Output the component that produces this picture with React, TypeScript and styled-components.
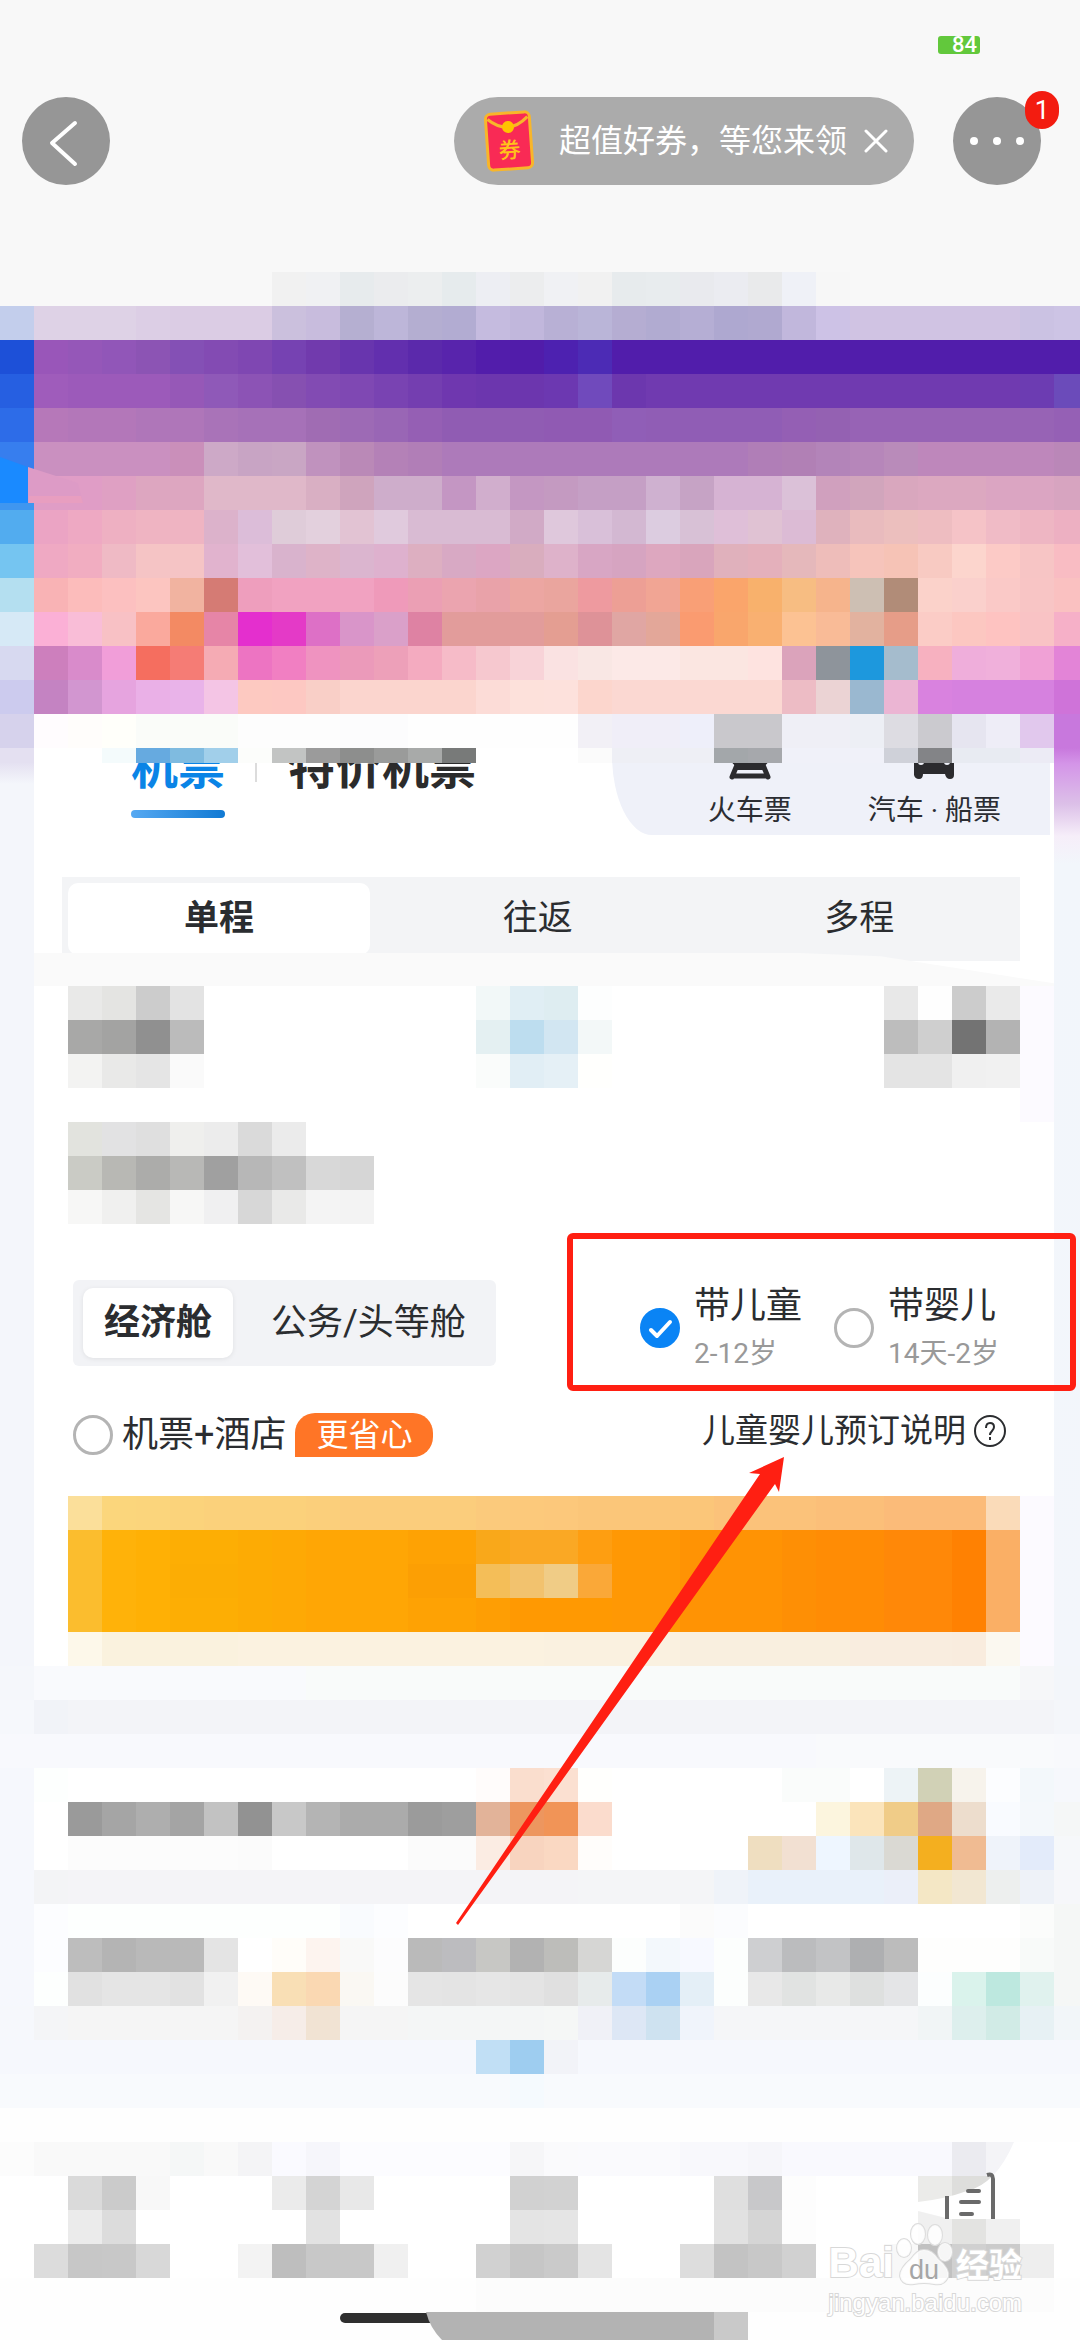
import React from 'react';
import styled, { createGlobalStyle } from 'styled-components';

const GlobalStyle = createGlobalStyle`
  *, *::before, *::after { box-sizing: border-box; }
  html, body { margin: 0; padding: 0; background: #fdfdfd; }
  body { font-family: Roboto, "Noto Sans CJK SC", sans-serif; color: #2b2d30; }
  button { font: inherit; color: inherit; border: 0; padding: 0; background: none; cursor: pointer; }
`;

/* ---------- pixelated areas ---------- */

const MosaicGrid = styled.div<{ $columns: string }>`
  display: grid;
  grid-template-columns: ${(p) => p.$columns};
`;

const Cell = styled.span<{ $color: string; $span: number; $height: number }>`
  grid-column: span ${(p) => p.$span};
  height: ${(p) => p.$height}px;
  background: ${(p) => p.$color};
`;

const FULL_WIDTH = 'repeat(31, minmax(0, 34fr)) minmax(0, 26fr)';
const CARD_WIDTH = 'repeat(30, minmax(0, 1fr))';

type MosaicProps = { rows: string[]; columns?: string; heights?: number[] };

/* Each row lists hex colours, "x*n" repeats one, "-" leaves the cell clear. */
function Mosaic({ rows, columns = FULL_WIDTH, heights = [] }: MosaicProps) {
  return (
    <MosaicGrid $columns={columns} aria-hidden="true">
      {rows.map((row, r) =>
        row.split(' ').map((token, c) => {
          const [color, count] = token.split('*');
          return (
            <Cell
              key={`${r}-${c}`}
              $color={color === '-' ? 'transparent' : `#${color}`}
              $span={Number(count ?? 1)}
              $height={heights[r] ?? 34}
            />
          );
        }),
      )}
    </MosaicGrid>
  );
}

const bannerRows = [
  'f8f8f8*8 f1f1f1 f0f1f3 e7ebed ebecee eceeef e6ebed edeef3 ecedee f0f1f4 f1f1f1 e7ebed e8ecee e9eaee ebecf1 e9eaeb eff1f7 f7f7f7 f8f8f8*7',
  'c3ceec ded2e6*3 dccee5 dbcce4*3 cbc0dd c8bcdd b5afd1 bdb6d9 b4aed1 b2acd2 c5bbdf c1b7dc b8b0d5 bab5d8 b5add2 b1abd1 b5aed4 aea8d0 b0a9d0 c1b7dc cdc2e6 d0c3e3*5 cbc2e3 cdc4e5',
  '1d50d8 9956b9 9557b8 9156b8 8c54b4 8450b5 834bb3 7f47b2 7642b2 713aad 6835ae 622fae 5b29ab 5824ac 521dab 511caa 4d21b0 4c2bb5 511dab*14',
  '265fe1 9f5cbb 9c5aba*3 9658b7 8f59b8 8c53b5 8650b1 824bb3 7f48b3 7943b2 743eb0 6f37af 6c36ae*2 6c38b1 704abc 6c37ae 703ab0*11 6c3cb2 6b4bba',
  '2d6ce8 b678b9 b377b9*2 af76b9*2 a973b8 a671b8*2 a06cb3 9d6ab5 9966b5 955fb4 905cb3*3 905ab3*2 905eb7 905db5*4 945fb4 9461b2 9763b5*6 9560b5',
  '377eee ca90c0*4 ca8fba cda9c7 c8a4c4 c9a6c4 c092be ba89b7 b481b7 b17eb7 ad7aba*9 b07eb7 b180b5 b384b9 b686ba b98bba be87bb*4 ba87b8',
  '3f96f0 e09dc6*2 dfa0c3 dda6c0*2 e0b8c9*3 d9afc3 cfa4bd ceadcb*2 c496c3 d1aecd c497c2 c49ac1 c59fc5*2 cfb1d0 c6a3c5 d6b3d3*2 dbc1d8 d0a0be d1a5bc d9a7be dca8c0*2 dba5c2*2 d7a4c0',
  '52acef eba4c4 eea9c3 eeb0c2 efb4c2*2 dcb2cb dcbdd9 dfccd9 e3d0dd e2c3d3 e0cadd d9bbd3*3 d1aac6 dfc8dc d9c0d9 d3b8d2 dccce0 d8c1d6 dfbfd8 e0c2d3 dcbbd5 dfb2bd e9bbbe ecbfbe eebdc1 f5c3c7 f0bbc6 eeb6c3 edb0c2',
  '75c5f1 efa9c3 f1adc1 efbac5 f5c4c5*2 e1b3ce e2bfda d9b3cd deb3c8 dbb5cf deb1ce ddafc1 d8a9c4 dca6c3 d9adbe deb2ca d8a6c4 d6a4c1 dda7bf d9a5bc e0b1bc e4b0bb e5b8bb eebdba f6c4bb f6c3b6 f8cac2 fcd5cd fccac6 f7c5c5 f9bcc3',
  'b4dff0 f9b3b5 fcbcbb fcc0c0 fcc5c0 f1b3a0 d57b74 ee9ebd f1a2c1*3 ef9aba eb9fb4 eba4af e9a2a9 eca6a2 eaa59e ee9a9f ed9f95 f1a594 f99f76 faa56b f8b16c f7bd82 f6b48c cdbfb3 b18c78 fbd2ca fad0cc fac9c7 f8c5c5 fac1c1',
  'd6e9f6 fbb0d6 f9bdd7 f8c1c5 faa99d f38a63 e685a7 e42fce e43ac7 dd70c6 d995c9 daa0c9 de82a3 e29c9b*3 e49e92 de9298 e0a6a3 e3a799 fa9b70 f9a66c f9b071 fcc293 f9bb97 e2b29f e69d88 fbccc6 fcc7c1 fec3c1 f9c3c5 f6b0c8',
  'd7d9f0 cd7fbd d98bcb f19ed9 f56e5f f57c75 f5abb4 ed74c2 f17fc2 ef93c0 eb9aba eda0b9 f4abc0 f6bbc8 f6c8cf f8d3d8 fae2e2 f9e7e4 fce9e7*2 fbe6e1*2 fee3e0 dba3bb 8e949b 1d98dd a5bccd f7b1c0 efaedb f0b0db f0a1d6 e384d7',
  'cccbee c483c2 d296d0 e6a4df eab0e7 e9b3e9 f4c5e5 fdc9c1 fdc8c2 f9cfc7 fbd5ce*4 fcdcd7 fde1db fde1dc fcd6cd fbd8d2*5 edbcc5 ebd3d4 9ab8d0 ebb5d3 d982df d681df*3 cf73d9',
];

const headRows = [
  'd6d2ec fffcfe fffdfb fffffa fafcf9*3 fdfdfd*3 fcfcfd*2 fefefe*5 f2f0f6 f0eef8*2 eeeffa c9c8cc*2 efeff6*2 edeff5 dddce2 cbcacf e6e5f0 eeedf7 e1c8ed c878dd',
  'e4e0f1 ffffff*2 f4fbfc 66aae0 7fbbe0 a1cfea fcfdfb c2c4c3 9b9b9b 8d8e8d 9a9b9a a8aaa9 787a79 ffffff*3 fbfbfb eeeff5*3 a3a7aa a6a8ac f0f1f9*3 cfd1d9 838487 e8ebf2*2 ecebf5 -',
];

const tripRows = [
  'ffffff e9e9e8 e4e4e2 cccccc e3e3e3 ffffff*8 f2f8f8 e0eef4 deedf1 fdfefe ffffff*8 e8e8e8 fefefe cccccc eaeaea fcfaff',
  'ffffff a8a8a7 a3a3a2 909090 bbbbbb ffffff*8 e4f0f2 bdddef d2e6f2 f3f8f8 ffffff*8 bdbdbd cfcfcf 737373 b3b3b3 fcfaff',
  'ffffff f3f3f2 e9e9e8 e5e5e5 fafafa ffffff*8 fafcfb e1eef5 e5f0f6 fffffd ffffff*8 e4e4e4*2 f0f0f0 f1f1f1 fcfaff',
  'ffffff*29 fcfaff',
  'ffffff e2e3de e2e2e3 dfdfdf efefed ececec dadada ebebeb ffffff*22',
  'ffffff cacbc5 b8b8b4 acacaa b8b8b6 a0a0a0 b7b7b7 c0c0c0 d8d8d8 d6d6d6 ffffff*20',
  'ffffff f7f7f6 f0f0ef e5e5e3 f7f7f6 f0f0f1 d7d7d7 e9e9e8 f4f4f4 f3f3f3 ffffff*20',
];

const submitRows = [
  'ffffff fbdf9a fbd67c fbd57c fbd37b fbd17b*3 fbcf7b fbcd7c*4 fbca7c fcc97b fcc87b fbc679*4 fbc27a*3 fbbf79*2 fbbb79*3 fadbb9 fcfaff',
  'ffffff fbbd2e ffb209 ffb005 fdae04*2 fdab04 fea905 ffa605*3 fea204*2 f9a81a faa824*2 fe9e11 ff9804*2 ff9304*3 fe8f05 ff8c05*2 ff8808*2 ff8102 faaf65 fcfaff',
  'ffffff fbbd2e ffb209 ffb005 fcad04*2 fdab04 fea905 ffa605*3 fc9f04*2 f4be58 f2c26e f0cc86 faa838 ff9804*2 ff9304*3 fe8f05 ff8c05*2 ff8808*2 ff8102 faaf65 fcfaff',
  'ffffff fbbd2e ffb209 ffb005 fdae04*2 fdab04 fea905 ffa605*3 fea204*2 fe9e04 ff9902*3 ff9804*2 ff9304*3 fe8f05 ff8c05*2 ff8808*2 ff8102 faaf65 fcfaff',
  'ffffff fdf8ea faf2de*4 fbf2e0*9 faf1e0*4 f9efdf*5 f9eddf*3 f9ecde fbf8f0 fcfaff',
];

const promoRows = [
  'f5f7fb f9fafd*8 f9fbfa*21 f6f7f9 f3f6fa',
  'f6f8fc f1f3f8 f3f4f8*29 f4f6fa',
  'f8f9fd*24 f9fafc*7 f8f9fc',
  'f6f8fd fdfffe ffffff*12 fffcfb fadece fbe0d1 fffffd ffffff*5 fafcfb*2 ffffff edf3f6 d1d1b6 f7f3ec fcfdff f3f8fb f6f8fc',
  'f6f8fd ffffff 9a9a9a a5a5a5 aeaeae a4a4a4 c2c2c2 929292 c8c8c8 b4b4b4 ababab*2 9b9b9b 9e9e9e e2b399 ed965f f19457 fbdccd ffffff*6 fcf5de fbe4bb f0cc88 dfa885 edddcd f9fbff f4f8fb f5f7f7',
  'f6f8fd ffffff fcfcfc*5 fbfbfb ffffff*4 fbfbfb*2 fbece3 f8d4bf fad8c2 fffdfb ffffff*4 efdec0 f2e0d2 eef6ff dfe7ea dad9d3 f4af1f f0bb92 eff3fa e3ebfa f6f8fa',
  'f6f8fd f3f4f6 f4f4f7*15 f4f5f7*4 eff3f9 e9f1fa*4 ebeff9 f4e7c5 f2e7d2 edefee eef2f8 f6f7fa',
  'f6f8fd fcfdff fdfffe*8 f9fbfe fcfdff ffffff*8 fbfbfb fbfcfe ffffff*8 fbfcfb f5f7f6',
  'f6f8fd fcfdff bdbdbd b4b4b4 b9b9b9*2 e4e4e4 ffffff fffdf9 fdf4ef f9f9f8 fcfcfd bababa bcbcbf c7c7c4 b2b2b2 bdbdba d6d6d4 fcfefd f3f8fc f7f9ff fcfefd cecfd1 bbbcbe c2c3c5 aeafb1 bcbcbc fefefd*3 f8faf9 f5f7f6',
  'f6f8fd fdfffe e1e1e1 e5e5e5*2 e2e2e2 f1f1f1 fefaf5 f9dfb5 fad8b2 faf8f3 fcfcfc e5e5e5 e4e4e4 e6e6e6 e4e4e4 e0e0e0 e7ebeb c3dcf6 aad1f3 e4eff7 fcfefd e8e8e8 e1e3e2 e8e9e8 dee0df e4e5e7 fcfefe daf3ec bde8df e0f2ee f5f7f6',
  'f6f8fc f4f5f7 f5f5f5*5 f4f2f1 f6ede8 f1e3d3 f5f5f5*2 f4f6f6*4 f5f7f6 f0f1f7 dde7f5 cee2f0 f0f4fb f5f6f8*6 f1f5f6 ddefed d1ebe6 e7f1f4 f2f6f9',
  'f6f8fd*14 c1dff5 9ecdf0 f2f3f8 f6f8fd*15',
  'f8fafd*15 f5fafe f8fafd*16',
  'fefefe*32',
];

const navRows = [
  'fcfcfc f9f9f9*4 f5f7f7 f9f9f9 f4f4f6 fafaff f6f6fb fcfcff*5 f6f6f8 fafafc fafafd*3 f8f8fc*2 f6f6fa f9f9fe*5 ebebf0 f4f4f7 ffffff*2',
  'ffffff*2 dadada cbcbcb f8f8f8 ffffff*3 ebebeb d4d4d4 e8e8e8 ffffff*4 d1d1d1 d2d2d2 ffffff*4 dfdfdf c8c8ca fdfdfd ffffff*3 ebebe9 dededc dededc ffffff*2',
  'ffffff*2 ebebeb dcdcdc ffffff*5 e2e2e2 ffffff*5 e4e4e4 e5e5e5 ffffff*4 e1e1e1 d5d5d5 fdfdfd ffffff*3 f0f0f0 e3e3e1 f0f0f0 ffffff*2',
  'ffffff dcdcdc c7c7c7 c8c8c8 d8d8d8 ffffff*2 f3f3f3 bebebe c8c8c8*2 f0f0f0 ffffff*2 d1d1d1 c6c6c6 cacaca e4e4e4 ffffff*2 dddddd c3c3c3 c8c8c8 d1d1d1 ffffff*2 f8f8f8 c1c1c1 d0d0d0 cbcbcb eeeeee ffffff',
  'fefefe*14 fcfcfc*17 fefefe',
];

/* ---------- status bar and header ---------- */

const Page = styled.main`
  position: relative;
  width: 100%;
  overflow: hidden;
  background: #f8f8f8;
`;

const StatusBar = styled.div`
  display: flex;
  justify-content: flex-end;
  align-items: flex-end;
  height: 54px;
  padding-right: 100px;
`;

const Battery = styled.span`
  width: 42px;
  height: 18px;
  padding-right: 3px;
  border-radius: 3px;
  background: #62c83c;
  color: #fff;
  font-size: 22px;
  font-weight: 500;
  line-height: 18px;
  text-align: right;
`;

const Header = styled.header`
  display: flex;
  align-items: center;
  height: 218px;
  padding: 43px 39px 87px 22px;
`;

const RoundButton = styled.button`
  position: relative;
  display: grid;
  place-items: center;
  width: 88px;
  height: 88px;
  border-radius: 50%;
  background: #969696;
`;

const Coupon = styled.div`
  display: flex;
  align-items: center;
  height: 88px;
  margin-left: auto;
  margin-right: 39px;
  padding: 0 26px 0 30px;
  border-radius: 44px;
  background: #ababab;
  color: #fff;
`;

const CouponText = styled.span`
  margin: 0 17px 0 25px;
  font-size: 32px;
  line-height: 44px;
`;

const Close = styled.button`
  display: grid;
  place-items: center;
  width: 24px;
  height: 44px;
`;

const Badge = styled.span`
  position: absolute;
  top: -6px;
  right: -18px;
  width: 34px;
  height: 38px;
  border-radius: 17px;
  background: #f31c10;
  color: #fff;
  font-size: 26px;
  line-height: 38px;
  text-align: center;
`;

const Banner = styled.section`
  position: relative;
`;

const BannerShard = styled.svg`
  position: absolute;
  left: 0;
  top: 185px;
`;

/* ---------- booking card ---------- */

const Booking = styled.section`
  position: relative;
  padding: 0 26px 0 34px;
  background:
    linear-gradient(#c878dd 34px, #d495e8 50px, #dcc0e8 90px, #f6eef9 122px, #f2f6fb 150px, #f3f6fb) right / 26px 100% no-repeat,
    linear-gradient(#e4e0f1 48px, #f4f6fb 70px, #f4f6fb) left / 34px 100% no-repeat;
`;

const Card = styled.div`
  background: #fff;
`;

const HeadMask = styled.div`
  position: absolute;
  inset: 0 0 auto 0;
`;

const ProductHead = styled.div`
  display: flex;
  justify-content: space-between;
`;

const ProductTabs = styled.nav`
  display: flex;
  align-items: flex-start;
  padding: 28px 0 0 97px;
`;

const ProductTab = styled.button<{ $active?: boolean }>`
  display: flex;
  flex-direction: column;
  gap: 16px;
  font-size: 47px;
  font-weight: 700;
  line-height: 52px;
  color: ${(p) => (p.$active ? '#0a84e6' : '#2b2b2b')};

  &::after {
    content: '';
    height: 8px;
    border-radius: 4px;
    background: ${(p) => (p.$active ? 'linear-gradient(90deg, #56a9f2, #1079d3)' : 'transparent')};
  }
`;

const Divider = styled.span`
  width: 2px;
  height: 24px;
  margin: 16px 31px 0 30px;
  background: #dcdcdc;
`;

const SidePanel = styled.nav`
  display: flex;
  gap: 76px;
  height: 121px;
  margin-right: 4px;
  padding: 22px 49px 0 96px;
  border-bottom-left-radius: 40px 80px;
  background: #eff1f9;
`;

const SideLink = styled.a`
  display: flex;
  flex-direction: column;
  align-items: center;
  gap: 13px;
  color: #2b2d33;
  font-size: 28px;
  line-height: 36px;
  text-decoration: none;
`;

const TripTabs = styled.div`
  display: grid;
  grid-template-columns: 309px 1fr 1fr;
  height: 84px;
  margin: 42px 34px 0 28px;
  padding: 6px 0 0 6px;
  background: #f3f4f6;
`;

const TripTab = styled.button<{ $active?: boolean }>`
  height: 72px;
  margin-right: ${(p) => (p.$active ? 7 : 0)}px;
  border-radius: 10px;
  background: ${(p) => (p.$active ? '#fff' : 'transparent')};
  font-size: 35px;
  font-weight: ${(p) => (p.$active ? 700 : 400)};
  line-height: 72px;
`;

const Band = styled.div`
  position: relative;
  height: 33px;
  margin-top: -8px;
  background: #fafafa;
  clip-path: polygon(0 0, 75% 0, 83% 10%, 100% 92%, 100% 100%, 0 100%);
`;

const OptionRow = styled.div<{ $top: number; $center?: boolean }>`
  display: flex;
  justify-content: space-between;
  align-items: ${(p) => (p.$center ? 'center' : 'flex-start')};
  margin-top: ${(p) => p.$top}px;
  padding: 0 47px 0 39px;
`;

const CabinSwitch = styled.div`
  display: flex;
  height: 86px;
  padding: 8px 10px;
  border-radius: 6px;
  background: #f2f3f6;
`;

const Cabin = styled.button<{ $active?: boolean }>`
  height: 70px;
  padding: 0 ${(p) => (p.$active ? 21 : 0)}px;
  margin-right: ${(p) => (p.$active ? 38 : 20)}px;
  border-radius: 10px;
  background: ${(p) => (p.$active ? '#fff' : 'transparent')};
  box-shadow: ${(p) => (p.$active ? '0 1px 5px rgba(0, 0, 0, 0.08)' : 'none')};
  font-size: 36px;
  font-weight: ${(p) => (p.$active ? 700 : 400)};
  line-height: 70px;
`;

const Travellers = styled.div`
  display: flex;
  gap: 32px;
  margin-right: 8px;
`;

const CheckLabel = styled.label<{ $gap: number }>`
  display: flex;
  align-items: center;
  gap: ${(p) => p.$gap}px;
  font-size: 36px;
  line-height: 52px;
`;

const CheckBox = styled.span`
  display: grid;
  width: 40px;
  height: 40px;

  > * { grid-area: 1 / 1; }
  svg { pointer-events: none; }
`;

const CheckInput = styled.input`
  appearance: none;
  width: 40px;
  height: 40px;
  margin: 0;
  border: 3px solid #b4b4b4;
  border-radius: 50%;
  background: #fff;

  &:checked { border-color: #0a84f5; background: #0a84f5; }
  &:not(:checked) + svg { display: none; }
`;

const Age = styled.small`
  display: block;
  color: #999;
  font-size: 28px;
  line-height: 44px;
`;

const Tag = styled.span`
  height: 44px;
  padding: 0 21px;
  border-radius: 20px 20px 20px 0;
  background: #ff7526;
  color: #fff;
  font-size: 32px;
  line-height: 44px;
`;

const HelpLink = styled.a`
  display: flex;
  align-items: center;
  gap: 8px;
  padding-bottom: 8px;
  color: #2b2d30;
  font-size: 33px;
  line-height: 36px;
  text-decoration: none;
`;

const Submit = styled.button`
  display: block;
  width: 100%;
  margin-top: 35px;
`;

const Highlight = styled.div`
  position: absolute;
  top: 519px;
  right: 4px;
  width: 509px;
  height: 158px;
  border: 6px solid #ff1f12;
  border-radius: 6px;
  pointer-events: none;
`;

const Arrow = styled.svg`
  position: absolute;
  z-index: 1;
  top: 743px;
  right: 295px;
  pointer-events: none;
`;

/* ---------- bottom ---------- */

const BottomNav = styled.nav`
  position: relative;
  background: #fff;
`;

const OrdersIcon = styled.svg`
  position: absolute;
  top: 0;
  right: 26px;
`;

const HomeBar = styled.div`
  height: 28px;
  background: #fefefe;

  svg { display: block; margin-left: 340px; }
`;

const Watermark = styled.div`
  position: absolute;
  right: 58px;
  bottom: 22px;
  display: flex;
  flex-direction: column;
  color: #fff;
  font-family: "Liberation Sans", "Noto Sans CJK SC", sans-serif;
  paint-order: stroke fill;
  -webkit-text-stroke: 2px #d8d8d8;
`;

const Brand = styled.div`
  display: flex;
  align-items: flex-end;
  height: 70px;
  font-size: 42px;
  font-weight: 700;
  line-height: 50px;
`;

const BrandHan = styled.span`
  margin-left: 2px;
  font-size: 33px;
  line-height: 44px;
`;

const Site = styled.span`
  font-size: 24px;
  line-height: 30px;
`;

function TrainIcon() {
  return (
    <svg width="44" height="44" viewBox="0 0 44 44" aria-hidden="true">
      <path d="M8 2h28q4 0 4 4v18q0 5-5 6H9q-5-1-5-6V6q0-4 4-4z" fill="#2b2b2e" />
      <path d="M9 29 4 41M35 29l5 12M5 40h34" stroke="#2b2b2e" strokeWidth="5" strokeLinecap="round" fill="none" />
      <path d="M8 32h28" stroke="#2b2b2e" strokeWidth="4" />
    </svg>
  );
}

function CarIcon() {
  return (
    <svg width="44" height="44" viewBox="0 0 44 44" aria-hidden="true">
      <path d="M9 4h26l7 16v19q0 4-4 4t-5-5H11q0 5-4 5t-5-4V20z" fill="#2b2b2e" />
      <circle cx="9" cy="26" r="3" fill="#eff1f9" />
      <circle cx="35" cy="26" r="3" fill="#eff1f9" />
    </svg>
  );
}

function Tick() {
  return (
    <svg width="40" height="40" viewBox="0 0 40 40" aria-hidden="true">
      <path d="m11 22 6 6 13-14" fill="none" stroke="#fff" strokeWidth="4" strokeLinecap="round" strokeLinejoin="round" />
    </svg>
  );
}

export default function App() {
  return (
    <Page>
      <GlobalStyle />
      <StatusBar>
        <Battery>84</Battery>
      </StatusBar>
      <Header>
        <RoundButton aria-label="返回">
          <svg width="88" height="88" viewBox="0 0 88 88" aria-hidden="true">
            <path d="M53 26 30 46l23 21" fill="none" stroke="#fff" strokeWidth="4" strokeLinecap="round" strokeLinejoin="round" />
          </svg>
        </RoundButton>
        <Coupon>
          <svg width="50" height="62" viewBox="0 0 50 62" aria-hidden="true">
            <g transform="rotate(-4 25 31)">
              <rect x="3" y="3" width="44" height="56" rx="5" fill="#f92a55" stroke="#f8b62a" strokeWidth="3" />
              <path d="M5 8q20 18 40 0" fill="none" stroke="#f8b62a" strokeWidth="3" />
              <circle cx="25" cy="17" r="6" fill="#ffc400" />
              <text x="25" y="48" fontSize="22" fontWeight="500" fill="#ffc21a" textAnchor="middle">券</text>
            </g>
          </svg>
          <CouponText>超值好券，等您来领</CouponText>
          <Close aria-label="关闭">
            <svg width="24" height="24" viewBox="0 0 24 24" aria-hidden="true">
              <path d="m2 2 20 20M22 2 2 22" stroke="#fff" strokeWidth="3" strokeLinecap="round" />
            </svg>
          </Close>
        </Coupon>
        <RoundButton aria-label="更多">
          <svg width="60" height="10" viewBox="0 0 60 10" fill="#fff" aria-hidden="true">
            <circle cx="7" cy="5" r="4" />
            <circle cx="30" cy="5" r="4" />
            <circle cx="53" cy="5" r="4" />
          </svg>
          <Badge>1</Badge>
        </RoundButton>
      </Header>

      <Banner>
        <Mosaic rows={bannerRows} />
        <BannerShard width="84" height="46" viewBox="0 0 84 46" aria-hidden="true">
          <path d="M0 0 28 10V46H0z" fill="#1a8aff" />
          <path d="M28 10 78 26 83 46H28z" fill="#dd9bc6" />
          <path d="M29 39h52l2 7H29z" fill="#e89ec0" />
        </BannerShard>
      </Banner>

      <Booking>
        <Card>
          <ProductHead>
            <ProductTabs>
              <ProductTab $active>机票</ProductTab>
              <Divider />
              <ProductTab>特价机票</ProductTab>
            </ProductTabs>
            <SidePanel>
              <SideLink href="#train"><TrainIcon />火车票</SideLink>
              <SideLink href="#bus"><CarIcon />汽车 · 船票</SideLink>
            </SidePanel>
          </ProductHead>

          <TripTabs>
            <TripTab $active>单程</TripTab>
            <TripTab>往返</TripTab>
            <TripTab>多程</TripTab>
          </TripTabs>
          <Band />
          <Mosaic rows={tripRows} columns={CARD_WIDTH} />

          <OptionRow $top={56}>
            <CabinSwitch>
              <Cabin $active>经济舱</Cabin>
              <Cabin>公务/头等舱</Cabin>
            </CabinSwitch>
            <Travellers>
              <CheckLabel $gap={14}>
                <CheckBox><CheckInput type="checkbox" defaultChecked /><Tick /></CheckBox>
                <span>带儿童<Age>2-12岁</Age></span>
              </CheckLabel>
              <CheckLabel $gap={14}>
                <CheckBox><CheckInput type="checkbox" /><Tick /></CheckBox>
                <span>带婴儿<Age>14天-2岁</Age></span>
              </CheckLabel>
            </Travellers>
          </OptionRow>

          <OptionRow $top={33} $center>
            <CheckLabel $gap={9}>
              <CheckBox><CheckInput type="checkbox" /><Tick /></CheckBox>
              机票+酒店
              <Tag>更省心</Tag>
            </CheckLabel>
            <HelpLink href="#help">
              儿童婴儿预订说明
              <svg width="33" height="33" viewBox="0 0 33 33" fill="none" stroke="#2b2d30" strokeWidth="2" aria-hidden="true">
                <circle cx="16" cy="16" r="15" />
                <path d="M12 13q0-5 4-5t4 4q0 2-2 4t-2 4" />
                <path d="M16 22v3" />
              </svg>
            </HelpLink>
          </OptionRow>

          <Submit aria-label="搜索">
            <Mosaic rows={submitRows} columns={CARD_WIDTH} />
          </Submit>
        </Card>
        <HeadMask>
          <Mosaic rows={headRows} heights={[34, 15]} />
        </HeadMask>
        <Highlight />
        <Arrow width="330" height="470" viewBox="455 1457 330 470" aria-hidden="true">
          <path d="M784 1457 749 1473l11 1L456 1923l2 2L775 1484l4 8z" fill="#ff1f12" />
        </Arrow>
      </Booking>

      <Mosaic rows={promoRows} />

      <BottomNav>
        <Mosaic rows={navRows} />
        <OrdersIcon width="136" height="77" viewBox="918 2142 136 77" aria-hidden="true">
          <path d="M1014 2142q-18 42-47 49-22 8-49 11v9l32 8h104v-77z" fill="#fff" />
          <path d="M947 2196v23M987 2175q6-2 6 4v40" fill="none" stroke="#6a6a6a" strokeWidth="4" />
          <path d="M968 2191h11M961 2202h18M961 2214h11" stroke="#6a6a6a" strokeWidth="4" strokeLinecap="round" />
        </OrdersIcon>
      </BottomNav>

      <HomeBar>
        <svg width="410" height="28" viewBox="340 2312 410 28" aria-hidden="true">
          <rect x="340" y="2313" width="120" height="10" rx="5" fill="#2f2f2f" />
          <path d="M426 2312h288v28H442q-12-12-16-28z" fill="#b3b3b3" />
          <path d="M714 2312h34v28h-34z" fill="#c9c9c9" />
        </svg>
      </HomeBar>

      <Watermark>
        <Brand>
          Bai
          <svg width="60" height="66" viewBox="892 2223 60 66" aria-hidden="true">
            <g fill="#fff" fillOpacity="0.85" stroke="#dcdcdc" strokeWidth="2">
              <ellipse cx="902" cy="2249" rx="7" ry="9" />
              <ellipse cx="916" cy="2235" rx="7" ry="10" />
              <ellipse cx="933" cy="2236" rx="7" ry="10" />
              <ellipse cx="943" cy="2253" rx="7" ry="9" />
              <path d="M922 2251q8 0 14 9 12 10 10 18-4 9-14 7-10-2-20 0-12 2-14-8 0-8 11-17 6-9 13-9z" />
            </g>
            <text x="922" y="2280" textAnchor="middle" fontSize="27" fontWeight="400" fill="#a6a6a6" strokeWidth="0">du</text>
          </svg>
          <BrandHan>经验</BrandHan>
        </Brand>
        <Site>jingyan.baidu.com</Site>
      </Watermark>
    </Page>
  );
}
